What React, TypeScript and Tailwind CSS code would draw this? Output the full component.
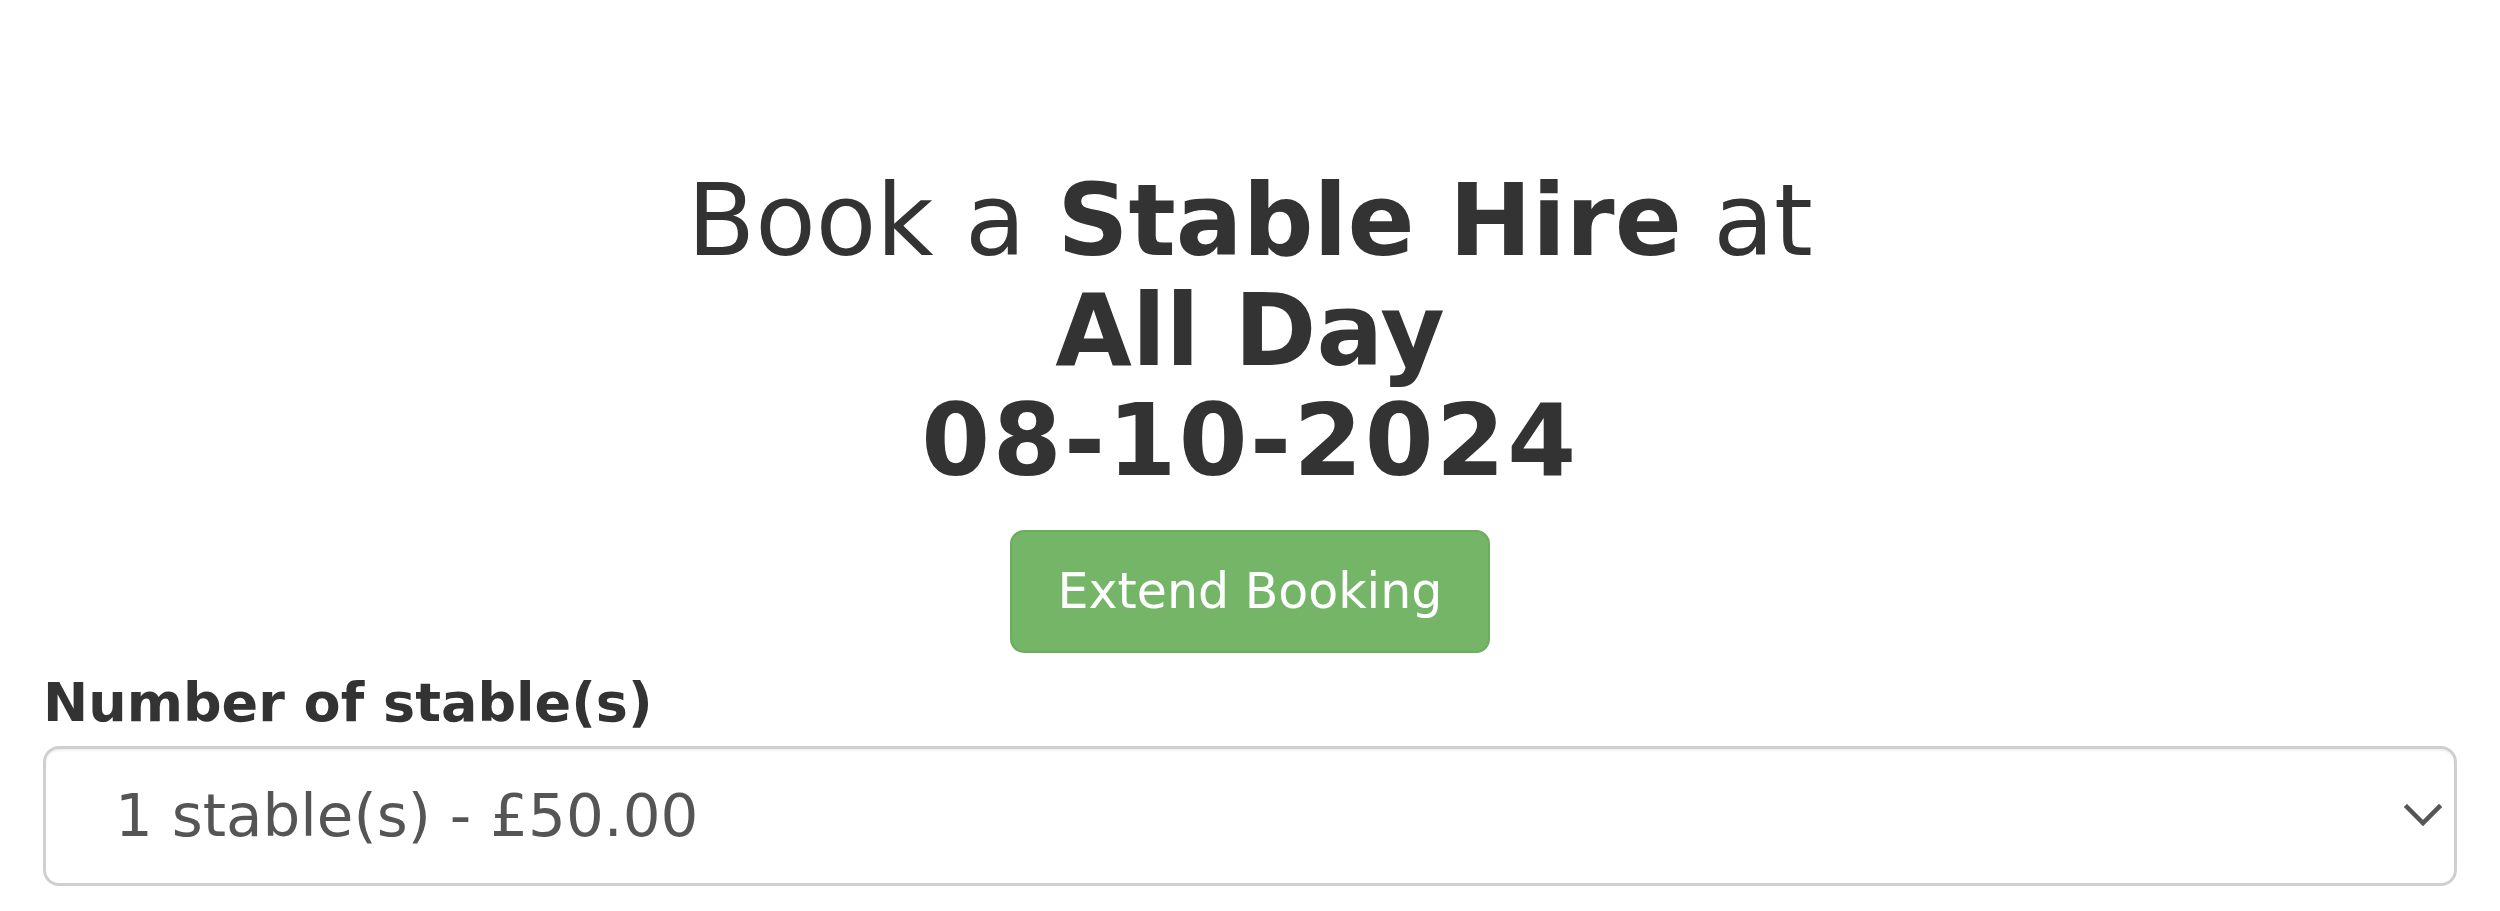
import { useState } from "react";

// Booking header + stable count picker
export default function App() {
  const [stables, setStables] = useState("1");

  return (
    <div className="min-h-screen bg-white text-[#333] font-['DejaVu_Sans',Verdana,sans-serif] px-[43px] pt-[166px]">
      <h1 className="text-center text-[99px] leading-[110px] font-normal">
        Book a <b className="font-bold">Stable Hire</b> at
        <br />
        <b className="font-bold">All Day</b>
        <br />
        <b className="font-bold tracking-[2.4px]">08-10-2024</b>
      </h1>

      <div className="flex justify-center mt-[34px]">
        <button
          type="button"
          className="h-[123px] w-[480px] rounded-[14px] border-2 border-[#6aad5d] bg-[#74b567] text-white text-[49px] leading-none"
        >
          Extend Booking
        </button>
      </div>

      <div className="mt-[12px]">
        <label className="block font-bold text-[54px] leading-[76px] mb-[5px]">
          Number of stable(s)
        </label>
        <div className="relative">
          <select
            value={stables}
            onChange={(e) => setStables(e.target.value)}
            className="block w-full h-[140px] appearance-none rounded-[16px] border-[3px] border-[#cfcfcf] bg-white pl-[69px] text-[59.5px] text-[#555] shadow-[inset_0_2px_2px_rgba(0,0,0,0.06)] outline-none font-['DejaVu_Sans',Verdana,sans-serif]"
          >
            <option value="1">1 stable(s) - £50.00</option>
            <option value="2">2 stable(s) - £100.00</option>
            <option value="3">3 stable(s) - £150.00</option>
          </select>
          <svg
            className="pointer-events-none absolute right-[15px] top-[58px] w-[38px] h-[24px]"
            viewBox="0 0 38 24"
            fill="none"
            stroke="#555"
            strokeWidth="4.5"
            strokeLinecap="square"
          >
            <path d="M3 3 L19 19 L35 3" />
          </svg>
        </div>
      </div>
    </div>
  );
}
